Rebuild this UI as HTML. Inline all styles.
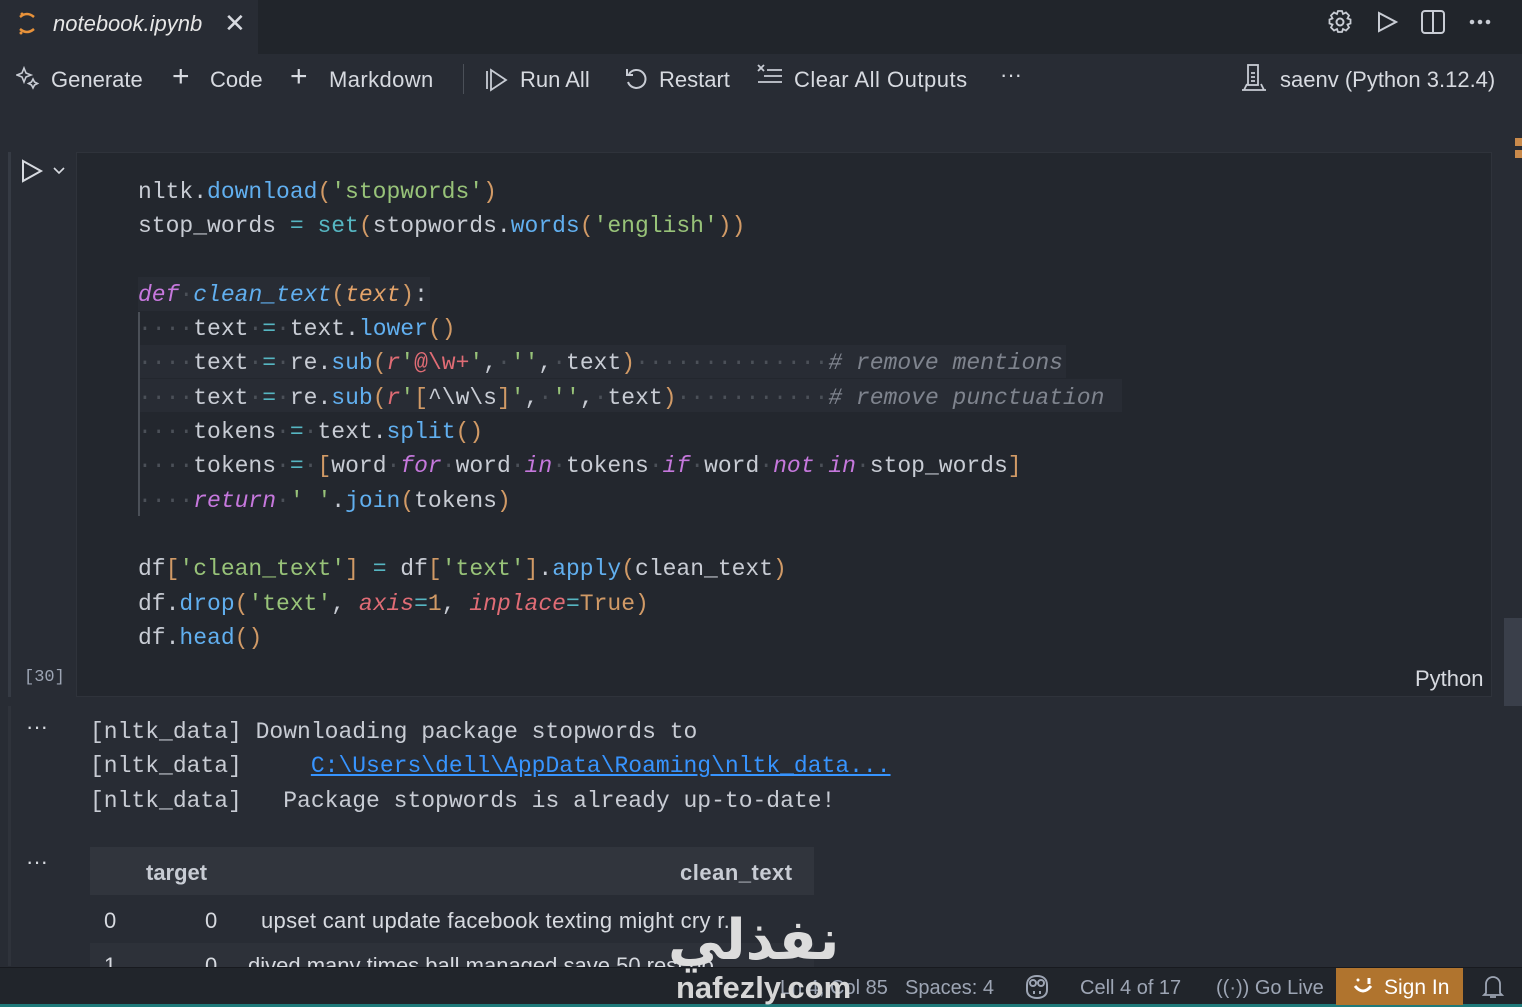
<!DOCTYPE html>
<html><head><meta charset="utf-8"><style>
*{margin:0;padding:0;box-sizing:border-box}
body{width:1522px;height:1007px;background:#282c34;overflow:hidden;position:relative;font-family:"Liberation Sans",sans-serif;color:#d7dae0}
.abs{position:absolute}
.ui{font-size:22px;color:#d7dae0;white-space:nowrap}
.mono{font-family:"Liberation Mono",monospace;font-size:23px;white-space:pre;line-height:34.3px;color:#c8ccd4}
.k{color:#c678dd;font-style:italic}.f{color:#61afef}.s{color:#98c379}.p{color:#d19a66}.o{color:#56b6c2}.fi{color:#61afef;font-style:italic}.pi{color:#e5a46a;font-style:italic}.c{color:#7f848e;font-style:italic}.r{color:#e06c75;font-style:italic}.d{color:#4b5058}
.st{font-size:20px;color:#9da5b4}
</style></head><body>
<!-- title bar -->
<div class="abs" style="left:0;top:0;width:1522px;height:54px;background:#21252b"></div>
<div class="abs" style="left:0;top:0;width:258px;height:54px;background:#282c34"></div>
<svg class="abs" style="left:14px;top:10px" width="26" height="26" viewBox="0 0 26 26"><path d="M6 7q7 -6 14 0M6 19q7 6 14 0" stroke="#e8923a" stroke-width="2.5" fill="none"/><circle cx="8" cy="4" r="1.5" fill="#e8923a"/><circle cx="7" cy="23" r="1.5" fill="#e8923a"/></svg>
<div class="abs ui" style="left:53px;top:11px;font-style:italic;color:#e6e6e6">notebook.ipynb</div>
<div class="abs ui" style="left:224px;top:8px;font-size:26px">✕</div>
<svg class="abs" style="left:1326px;top:8px" width="180" height="28" viewBox="0 0 180 28" fill="none" stroke="#c8ccd4" stroke-width="2"><circle cx="14" cy="14" r="3.5"/><path d="M12 3h4l1 3 3-1.5 3 3-1.5 3 3 1v4l-3 1 1.5 3-3 3-3-1.5-1 3h-4l-1-3-3 1.5-3-3 1.5-3-3-1v-4l3-1-1.5-3 3-3 3 1.5z" stroke-width="1.8"/><path d="M53 5l17 9-17 9z"/><rect x="96" y="3" width="22" height="22" rx="3"/><path d="M107 3v22"/><circle cx="146" cy="14" r="1.3" fill="#c8ccd4"/><circle cx="154" cy="14" r="1.3" fill="#c8ccd4"/><circle cx="162" cy="14" r="1.3" fill="#c8ccd4"/></svg>
<!-- toolbar -->
<svg class="abs" style="left:16px;top:66px" width="24" height="24" viewBox="0 0 24 24" fill="none" stroke="#c8ccd4" stroke-width="1.6"><path d="M8 2l2 5 5 2-5 2-2 5-2-5-5-2 5-2z"/><path d="M17 13l1.5 3 3 1.5-3 1.5-1.5 3-1.5-3-3-1.5 3-1.5z"/></svg>
<div class="abs ui" style="left:51px;top:67px">Generate</div>
<div class="abs ui" style="left:172px;top:60px;font-size:30px;font-weight:300">+</div>
<div class="abs ui" style="left:210px;top:67px">Code</div>
<div class="abs ui" style="left:290px;top:60px;font-size:30px;font-weight:300">+</div>
<div class="abs ui" style="left:329px;top:67px;letter-spacing:0.4px">Markdown</div>
<div class="abs" style="left:463px;top:64px;width:1px;height:30px;background:#4b5058"></div>
<svg class="abs" style="left:482px;top:66px" width="28" height="28" viewBox="0 0 28 28" fill="none" stroke="#c8ccd4" stroke-width="1.8"><path d="M5 5v18M9 4l15 10-15 10z"/></svg>
<div class="abs ui" style="left:520px;top:67px">Run All</div>
<svg class="abs" style="left:623px;top:66px" width="26" height="26" viewBox="0 0 26 26" fill="none" stroke="#c8ccd4" stroke-width="2"><path d="M6 8a9 9 0 1 1 -1 8"/><path d="M4 3v6h6"/></svg>
<div class="abs ui" style="left:659px;top:67px">Restart</div>
<svg class="abs" style="left:756px;top:62px" width="28" height="28" viewBox="0 0 28 28" fill="none" stroke="#c8ccd4" stroke-width="1.8"><path d="M2 3l6 6M8 3l-6 6M11 8h15M8 14h18M2 20h24"/></svg>
<div class="abs ui" style="left:794px;top:67px;letter-spacing:0.5px">Clear All Outputs</div>
<div class="abs ui" style="left:1000px;top:62px">···</div>
<svg class="abs" style="left:1240px;top:63px" width="28" height="30" viewBox="0 0 28 30" fill="none" stroke="#c8ccd4" stroke-width="1.8"><rect x="8" y="2" width="10" height="20"/><path d="M11 10h4M11 14h4M11 18h4M2 27h24M4 27l3-6M24 27l-3-6"/></svg>
<div class="abs ui" style="left:1280px;top:67px">saenv (Python 3.12.4)</div>
<div class="abs" style="left:1515px;top:138px;width:7px;height:8px;background:#c98a4b"></div>
<div class="abs" style="left:1515px;top:150px;width:7px;height:8px;background:#c98a4b"></div>
<!-- scrollbar -->
<div class="abs" style="left:1504px;top:618px;width:18px;height:88px;background:#3a3f4a"></div>
<!-- cell -->
<div class="abs" style="left:8px;top:152px;width:3px;height:545px;background:#363b44"></div>
<div class="abs" style="left:76px;top:152px;width:1416px;height:545px;background:#23272e;border:1px solid #2f333b"></div>
<svg class="abs" style="left:20px;top:158px" width="50" height="26" viewBox="0 0 50 26" fill="none" stroke="#d7dae0" stroke-width="2"><path d="M3 3l18 10-18 10z"/><path d="M34 10l5 5 5-5" stroke-width="1.6"/></svg>
<div class="abs mono" style="left:24px;top:667px;font-size:17px;line-height:22px;color:#9da5b4">[30]</div>
<div class="abs ui" style="left:1415px;top:666px">Python</div>
<div class="abs" style="left:138px;top:312px;width:2px;height:204px;background:#4b5058"></div>
<div class="abs" style="left:138px;top:277px;width:292px;height:34px;background:#282c34"></div>
<div class="abs" style="left:140px;top:345px;width:926px;height:33px;background:#282c34"></div>
<div class="abs" style="left:140px;top:379px;width:982px;height:33px;background:#282c34"></div>
<div class="abs mono" style="left:138px;top:175px">nltk.<span class="f">download</span><span class="p">(</span><span class="s">'stopwords'</span><span class="p">)</span>
stop_words <span class="o">=</span> <span class="o">set</span><span class="p">(</span>stopwords.<span class="f">words</span><span class="p">(</span><span class="s">'english'</span><span class="p">))</span>

<span class="k">def</span><span class="d">·</span><span class="fi">clean_text</span><span class="p">(</span><span class="pi">text</span><span class="p">)</span>:
<span class="d">····</span>text<span class="d">·</span><span class="o">=</span><span class="d">·</span>text.<span class="f">lower</span><span class="p">()</span>
<span class="d">····</span>text<span class="d">·</span><span class="o">=</span><span class="d">·</span>re.<span class="f">sub</span><span class="p">(</span><span class="r">r</span><span class="s">'</span><span class="r" style="font-style:normal">@\w+</span><span class="s">'</span>,<span class="d">·</span><span class="s">''</span>,<span class="d">·</span>text<span class="p">)</span><span class="d">··············</span><span class="c"># remove mentions</span>
<span class="d">····</span>text<span class="d">·</span><span class="o">=</span><span class="d">·</span>re.<span class="f">sub</span><span class="p">(</span><span class="r">r</span><span class="s">'</span><span class="p">[</span>^\w\s<span class="p">]</span><span class="s">'</span>,<span class="d">·</span><span class="s">''</span>,<span class="d">·</span>text<span class="p">)</span><span class="d">···········</span><span class="c"># remove punctuation</span>
<span class="d">····</span>tokens<span class="d">·</span><span class="o">=</span><span class="d">·</span>text.<span class="f">split</span><span class="p">()</span>
<span class="d">····</span>tokens<span class="d">·</span><span class="o">=</span><span class="d">·</span><span class="p">[</span>word<span class="d">·</span><span class="k">for</span><span class="d">·</span>word<span class="d">·</span><span class="k">in</span><span class="d">·</span>tokens<span class="d">·</span><span class="k">if</span><span class="d">·</span>word<span class="d">·</span><span class="k">not</span><span class="d">·</span><span class="k">in</span><span class="d">·</span>stop_words<span class="p">]</span>
<span class="d">····</span><span class="k">return</span><span class="d">·</span><span class="s">' '</span>.<span class="f">join</span><span class="p">(</span>tokens<span class="p">)</span>

df<span class="p">[</span><span class="s">'clean_text'</span><span class="p">]</span> <span class="o">=</span> df<span class="p">[</span><span class="s">'text'</span><span class="p">]</span>.<span class="f">apply</span><span class="p">(</span>clean_text<span class="p">)</span>
df.<span class="f">drop</span><span class="p">(</span><span class="s">'text'</span>, <span class="r">axis</span><span class="o">=</span><span class="p">1</span>, <span class="r">inplace</span><span class="o">=</span><span class="p">True</span><span class="p">)</span>
df.<span class="f">head</span><span class="p">()</span></div>
<!-- output -->
<div class="abs" style="left:8px;top:706px;width:3px;height:260px;background:#2f333b"></div>
<div class="abs ui" style="left:26px;top:714px">···</div>
<div class="abs mono" style="left:90px;top:715px;color:#c8ccd4">[nltk_data] Downloading package stopwords to
[nltk_data]     <span style="color:#3794ff;text-decoration:underline">C:\Users\dell\AppData\Roaming\nltk_data...</span>
[nltk_data]   Package stopwords is already up-to-date!</div>
<div class="abs ui" style="left:26px;top:849px">···</div>
<div class="abs" style="left:90px;top:847px;width:724px;height:48px;background:#31353d"></div>
<div class="abs ui" style="left:146px;top:860px;font-weight:bold;color:#c8ccd4">target</div>
<div class="abs ui" style="left:680px;top:860px;font-weight:bold;color:#c8ccd4;letter-spacing:0.5px">clean_text</div>
<div class="abs ui" style="left:104px;top:908px">0</div>
<div class="abs ui" style="left:205px;top:908px">0</div>
<div class="abs ui" style="left:261px;top:908px;letter-spacing:0.3px">upset cant update facebook texting might cry r...</div>
<div class="abs" style="left:90px;top:943px;width:724px;height:30px;background:#2d3139"></div>
<div class="abs ui" style="left:104px;top:953px">1</div>
<div class="abs ui" style="left:205px;top:953px">0</div>
<div class="abs ui" style="left:248px;top:953px">dived many times ball managed save 50 rest go...</div>
<!-- status bar -->
<div class="abs" style="left:0;top:967px;width:1522px;height:40px;background:#21252b;border-top:1px solid #181a1f"></div>
<div class="abs" style="left:0;top:1004px;width:1522px;height:3px;background:#1f7a7a"></div>
<div class="abs ui st" style="left:780px;top:977px">Ln 4, Col 85</div>
<div class="abs ui st" style="left:905px;top:977px">Spaces: 4</div>
<svg class="abs" style="left:1022px;top:973px" width="30" height="28" viewBox="0 0 30 28" fill="none" stroke="#9da5b4" stroke-width="2"><path d="M5 12c0-6 4-9 10-9s10 3 10 9v5c0 5-4 8-10 8S5 22 5 17z"/><circle cx="11" cy="10" r="3"/><circle cx="19" cy="10" r="3"/><path d="M12 18v3M18 18v3"/></svg>
<div class="abs ui st" style="left:1080px;top:977px">Cell 4 of 17</div>
<div class="abs ui st" style="left:1216px;top:977px">((·)) Go Live</div>
<div class="abs" style="left:1336px;top:968px;width:127px;height:37px;background:#b0742e"></div>
<svg class="abs" style="left:1352px;top:976px" width="24" height="22" viewBox="0 0 24 22" fill="none" stroke="#fff" stroke-width="3"><path d="M3 10q8 10 16 0M17 2v6"/><circle cx="6" cy="4" r="1.5" fill="#fff" stroke="none"/></svg>
<div class="abs ui" style="left:1384px;top:976px;font-size:21px;color:#fff">Sign In</div>
<svg class="abs" style="left:1480px;top:973px" width="26" height="28" viewBox="0 0 26 28" fill="none" stroke="#9da5b4" stroke-width="1.8"><path d="M6 20V11a7 7 0 0 1 14 0v9l2 2H4zM10 24h6"/></svg>
<!-- watermark -->
<div class="abs" style="left:668px;top:895px;font-family:'Noto Sans CJK SC','DejaVu Sans',sans-serif;font-size:56px;font-weight:bold;color:#dcdcdc;direction:rtl">نفذلي</div>
<div class="abs" style="left:676px;top:970px;font-size:31px;font-weight:bold;color:#d6d6d6">nafezly.com</div>
</body></html>
